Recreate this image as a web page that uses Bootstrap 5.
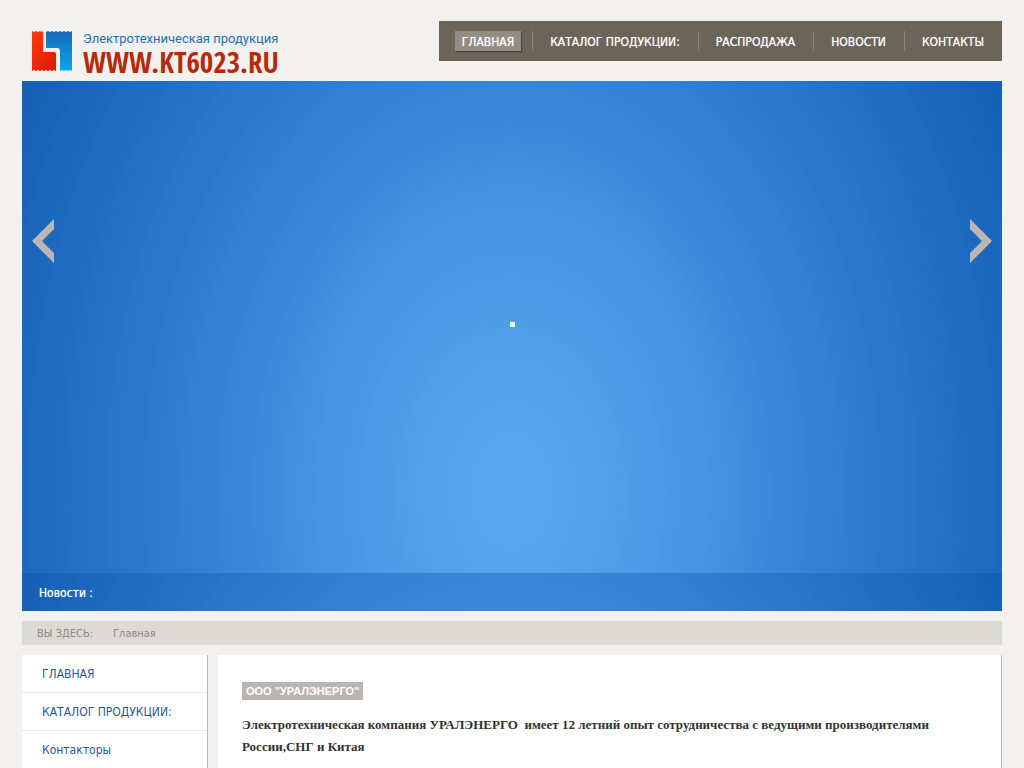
<!DOCTYPE html>
<html lang="ru">
<head>
<meta charset="utf-8">
<meta name="viewport" content="width=device-width, initial-scale=1">
<title>Электротехническая продукция</title>
<link href="https://cdn.jsdelivr.net/npm/bootstrap@5.3.0/dist/css/bootstrap.min.css" rel="stylesheet">
<style>
body { background: #f3f1ed; font: 12px/18px "DejaVu Sans Condensed", "Open Sans", sans-serif; color: #333; }
.site { padding: 0 22px; }
.site-head { padding-top: 21px; height: 81px; }
.logo { gap: 10px; padding: 9px 0 0 9px; }
.logo-top { font: 13px/18px Roboto, sans-serif; color: #1b70c0; }
.logo-name { font: bold 29px/27px "Open Sans Condensed", "Liberation Sans Narrow", sans-serif; color: #b52a0a; }
.menu { background: #6b6458; height: 40px; padding: 0 0 0 16px; }
.menu li { display: flex; align-items: center; }
.menu li + li { padding-left: 11px; }
.menu li + li::before { content: ""; width: 1px; height: 20px; background: #8a8379; margin-right: 10px; }
.menu a { color: #fff; padding: 2px 7px 0; line-height: 18px; text-decoration: none; white-space: nowrap; text-shadow: 0 0 1px rgba(255,255,255,.7); }
.menu li:last-child { padding-right: 11px; }
.menu a.active { background: #938d83; box-shadow: 1px 1px 1px #49443c; }
.blue { background: radial-gradient(490px 700px at 50% 410px, #58a8f2 0, #509fe9 22%, #4592df 42%, #3783d5 60%, #206dc1 95%, #165fb5 114%); }
.stage { height: 492px; padding: 0 10px; }
.stage button { margin-top: 138px; width: 22px; height: 44px; }
.stage svg, .logo svg { display: block; }
.dot { width: 5px; height: 5px; margin-top: 241px; background: #fff; }
.news { height: 38px; padding: 2px 17px 0; color: #fff; text-shadow: 0 0 1px rgba(255,255,255,.7); }
.crumbs { background: #dddad6; height: 24px; margin: 10px 0; padding: 2px 15px 0; gap: 20px; font-size: 11px; color: #8d8983; }
.crumbs a { color: inherit; text-decoration: none; }
.columns { gap: 10px; }
.side { flex: 0 0 186px; background: #fff; border-right: 1px solid #bbb8b4; }
.side a { display: block; padding: 10px 20px 9px; color: #1f579f; text-decoration: none; border-bottom: 1px solid #e9e8e6; }
.article { background: #fff; border-right: 1px solid #bbb8b4; padding: 27px 24px 9px; }
.article h1 { font: bold 11px/18px "Liberation Sans", sans-serif; color: #fff; background: #bab5b0; padding: 0 4px; display: table; margin: 0 0 14px; }
.article p { font: bold 13px/22px "Liberation Serif", serif; margin: 0; }
</style>
</head>
<body>
<div class="container-fluid site">
  <header class="site-head d-flex justify-content-between align-items-start">
    <a class="logo d-flex text-decoration-none" href="#">
      <svg width="42" height="42" viewBox="0 0 42 42" aria-hidden="true">
        <defs>
          <linearGradient id="r" x1="0" y1="0" x2="1" y2="1"><stop offset="0" stop-color="#ff3a10"/><stop offset="1" stop-color="#d91a04"/></linearGradient>
          <linearGradient id="b" x1="0" y1="0" x2="0" y2="1"><stop offset="0" stop-color="#1769b5"/><stop offset="1" stop-color="#08a8ee"/></linearGradient>
        </defs>
        <path fill="url(#r)" d="M1 1l2 1 2-1 2 1 2-1 2 1 1-1v21h11q2 0 2 2v17l-2-1-2 1-2-1-2 1-2-1-2 1-2-1-2 1-2-1-2 1-2-1-2 1z"/>
        <path fill="url(#b)" d="M15 2l2-1 2 1 2-1 2 1 2-1 2 1 2-1 2 1 2-1 2 1 2-1 2 1 2-1v40l-2-1-2 1-2-1-2 1-2-1-2 1V21q0-3-3-3h-11z"/>
      </svg>
      <span class="d-flex flex-column">
        <span class="logo-top">Электротехническая продукция</span>
        <span class="logo-name">WWW.KT6023.RU</span>
      </span>
    </a>
    <nav>
      <ul class="menu list-unstyled d-flex mb-0">
        <li><a class="active" href="#">ГЛАВНАЯ</a></li>
        <li><a href="#">КАТАЛОГ ПРОДУКЦИИ:</a></li>
        <li><a href="#">РАСПРОДАЖА</a></li>
        <li><a href="#">НОВОСТИ</a></li>
        <li><a href="#">КОНТАКТЫ</a></li>
      </ul>
    </nav>
  </header>
  <section class="stage blue d-flex justify-content-between align-items-start">
    <button type="button" class="border-0 bg-transparent p-0" aria-label="Назад"><svg width="22" height="44" viewBox="0 0 22 44"><path fill="#bdb7b3" d="M22 0v10L10 22l12 12v10L0 22z"/></svg></button>
    <span class="dot"></span>
    <button type="button" class="border-0 bg-transparent p-0" aria-label="Вперёд"><svg width="22" height="44" viewBox="0 0 22 44"><path fill="#bdb7b3" d="M0 0v10l12 12L0 34v10l22-22z"/></svg></button>
  </section>
  <div class="news blue d-flex align-items-center">Новости :</div>
  <div class="crumbs d-flex align-items-center"><span>ВЫ ЗДЕСЬ:</span><a href="#">Главная</a></div>
  <div class="columns d-flex">
    <nav class="side">
      <a href="#">ГЛАВНАЯ</a>
      <a href="#">КАТАЛОГ ПРОДУКЦИИ:</a>
      <a href="#">Контакторы</a>
    </nav>
    <main class="article flex-grow-1">
      <h1>ООО "УРАЛЭНЕРГО"</h1>
      <p>Электротехническая компания УРАЛЭНЕРГО &nbsp;имеет 12 летний опыт сотрудничества с ведущими производителями России,СНГ и Китая</p>
    </main>
  </div>
</div>
<script src="https://cdn.jsdelivr.net/npm/bootstrap@5.3.0/dist/js/bootstrap.bundle.min.js"></script>
</body>
</html>
